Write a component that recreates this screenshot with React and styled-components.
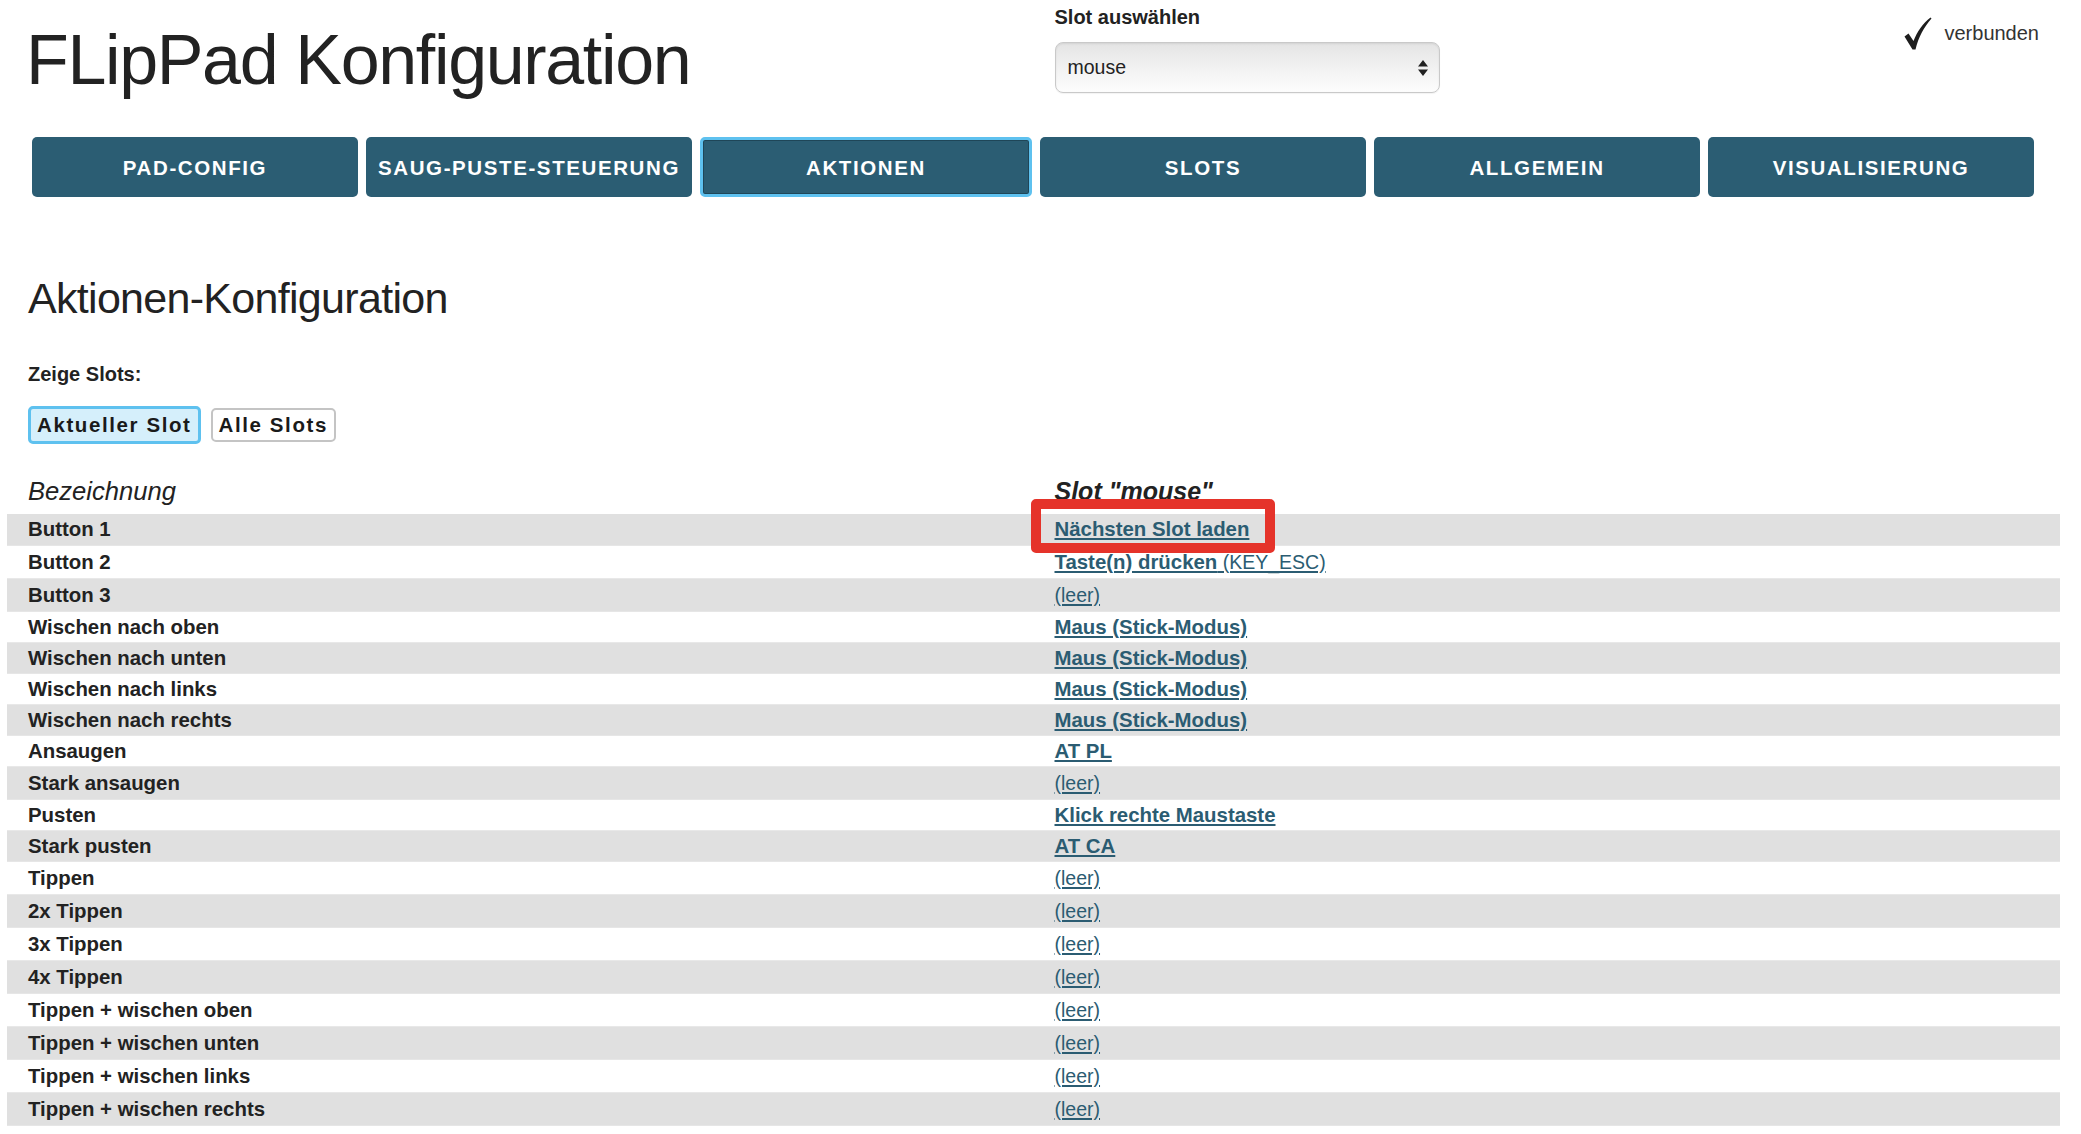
import React from 'react';
import styled, { createGlobalStyle } from 'styled-components';

const Global = createGlobalStyle`
  html, body { margin: 0; padding: 0; background: #fff; }
  body { font-family: "Liberation Sans", Arial, Helvetica, sans-serif; color: #222; }
  * { box-sizing: border-box; }
`;

const Page = styled.div`
  width: 2066px;
  position: relative;
`;

const Header = styled.header`
  display: grid;
  grid-template-columns: 1fr 1fr;
  margin: 0 6px 0 7px;
`;

const Title = styled.h1`
  margin: 25px 0 0 19px;
  font-size: 70px;
  line-height: 70px;
  font-weight: 400;
  letter-spacing: -1.35px;
  color: #222;
`;

const SlotArea = styled.div`
  display: flex;
  justify-content: space-between;
  align-items: flex-start;
  padding: 5px 21px 0 21px;
`;

const SlotPicker = styled.div`
  display: flex;
  flex-direction: column;
  gap: 13px;
`;

const Label = styled.label`
  font-size: 20px;
  line-height: 24px;
  font-weight: 700;
  color: #222;
`;

const SelectWrap = styled.div`
  position: relative;
  width: 385px;
  height: 51px;
  border: 1px solid #c9c9c9;
  border-radius: 8px;
  background: linear-gradient(#e4e4e4, #f4f4f4 60%, #fdfdfd);
  box-shadow: inset 0 1px 2px rgba(0,0,0,0.08), 0 1px 1px rgba(0,0,0,0.05);
  display: flex;
  align-items: center;
  padding-left: 12px;
  font-size: 19.5px;
  color: #222;
`;

const Arrows = styled.svg`
  position: absolute;
  right: 11px;
  top: 17px;
`;

const Status = styled.div`
  display: flex;
  align-items: center;
  gap: 12px;
  margin-top: 12px;
  font-size: 20px;
  color: #333;
`;

const Nav = styled.nav`
  display: flex;
  gap: 8px;
  margin: 42px 32px 0 32px;
`;

const Tab = styled.button`
  flex: 1;
  height: 60px;
  background: #2b5d73;
  color: #fff;
  border: ${p => (p.$active ? '3px solid #5ec1ef' : '0')};
  box-shadow: ${p => (p.$active ? 'inset 0 0 0 1px #1f4658' : 'none')};
  border-radius: 5px;
  font-family: "Liberation Sans", Arial, sans-serif;
  font-size: 20.5px;
  font-weight: 700;
  letter-spacing: 1.6px;
  text-transform: uppercase;
  padding: 2px 0 0;
`;

const Main = styled.main`
  margin: 0 6px 0 7px;
`;

const SectionTitle = styled.h2`
  margin: 75px 0 0 21px;
  font-size: 43px;
  line-height: 52px;
  font-weight: 400;
  letter-spacing: -0.7px;
  color: #222;
`;

const SubLabel = styled.div`
  margin: 38px 0 0 21px;
  font-size: 20px;
  line-height: 24px;
  font-weight: 700;
`;

const ToggleRow = styled.div`
  display: flex;
  align-items: center;
  gap: 10px;
  margin: 20px 0 0 21px;
`;

const Toggle = styled.button`
  height: ${p => (p.$active ? '38px' : '34px')};
  padding: 0 6px;
  border: ${p => (p.$active ? '3px solid #5ec1ef' : '2px solid #c4c4c4')};
  background: ${p => (p.$active ? '#d5effb' : '#fff')};
  border-radius: 5px;
  font-family: "Liberation Sans", Arial, sans-serif;
  font-size: 20.5px;
  font-weight: 700;
  letter-spacing: 1.6px;
  color: #1a1a1a;
`;

const Table = styled.table`
  width: 100%;
  margin-top: 32px;
  border-collapse: collapse;
  table-layout: fixed;
`;

const Th = styled.th`
  text-align: left;
  padding: 0 0 8px 21px;
  font-size: ${p => (p.$bold ? '25px' : '25.6px')};
  line-height: 30px;
  font-style: italic;
  font-weight: ${p => (p.$bold ? 700 : 400)};
  color: #222;
`;

const Row = styled.tr`
  height: ${p => (p.$tall ? '33px' : '31px')};
  background: ${p => (p.$odd ? '#e0e0e0' : '#fff')};
  border-bottom: 1px solid ${p => (p.$odd ? '#e6e6e6' : '#e8e8e8')};
`;

const Td = styled.td`
  padding: 0 0 0 21px;
  font-size: 20.4px;
  line-height: 22px;
  font-weight: 700;
  color: #222;
  vertical-align: middle;
`;

const ActionLink = styled.a`
  color: #2b5c72;
  text-decoration: underline;
  text-underline-offset: 2px;
  font-weight: 700;
  cursor: pointer;
`;

const Plain = styled.span`
  font-weight: 400;
  font-size: 19.5px;
`;

const Highlight = styled.div`
  position: absolute;
  left: 1031px;
  top: 499px;
  width: 244px;
  height: 54px;
  border: 10px solid #e5332a;
  border-radius: 5px;
  pointer-events: none;
`;

const CheckIcon = () => (
  <svg width="28" height="33" viewBox="0 0 28 33">
    <path d="M0.5 19.5 L4.5 16.5 L9.5 24 C13 15 19 6 26.5 0.5 L27.5 1.5 C20 10 14.5 20 11.5 32.5 L8.5 32.5 Z" fill="#1e1e1e" />
  </svg>
);

const rows = [
  ['Button 1', [['b', 'Nächsten Slot laden']]],
  ['Button 2', [['b', 'Taste(n) drücken'], ['n', ' (KEY_ESC)']]],
  ['Button 3', [['n', '(leer)']]],
  ['Wischen nach oben', [['b', 'Maus (Stick-Modus)']]],
  ['Wischen nach unten', [['b', 'Maus (Stick-Modus)']]],
  ['Wischen nach links', [['b', 'Maus (Stick-Modus)']]],
  ['Wischen nach rechts', [['b', 'Maus (Stick-Modus)']]],
  ['Ansaugen', [['b', 'AT PL']]],
  ['Stark ansaugen', [['n', '(leer)']]],
  ['Pusten', [['b', 'Klick rechte Maustaste']]],
  ['Stark pusten', [['b', 'AT CA']]],
  ['Tippen', [['n', '(leer)']]],
  ['2x Tippen', [['n', '(leer)']]],
  ['3x Tippen', [['n', '(leer)']]],
  ['4x Tippen', [['n', '(leer)']]],
  ['Tippen + wischen oben', [['n', '(leer)']]],
  ['Tippen + wischen unten', [['n', '(leer)']]],
  ['Tippen + wischen links', [['n', '(leer)']]],
  ['Tippen + wischen rechts', [['n', '(leer)']]],
];

const tabs = ['Pad-Config', 'Saug-Puste-Steuerung', 'Aktionen', 'Slots', 'Allgemein', 'Visualisierung'];

export default function App() {
  return (
    <Page>
      <Global />
      <Header>
        <Title>FLipPad Konfiguration</Title>
        <SlotArea>
          <SlotPicker>
            <Label>Slot auswählen</Label>
            <SelectWrap>
              mouse
              <Arrows width="10" height="16" viewBox="0 0 10 16">
                <path d="M5 0 L10 6.5 L0 6.5 Z M5 16 L10 9.5 L0 9.5 Z" fill="#222" />
              </Arrows>
            </SelectWrap>
          </SlotPicker>
          <Status>
            <CheckIcon />
            <span>verbunden</span>
          </Status>
        </SlotArea>
      </Header>
      <Nav>
        {tabs.map(t => (
          <Tab key={t} $active={t === 'Aktionen'}>{t}</Tab>
        ))}
      </Nav>
      <Main>
        <SectionTitle>Aktionen-Konfiguration</SectionTitle>
        <SubLabel>Zeige Slots:</SubLabel>
        <ToggleRow>
          <Toggle $active>Aktueller Slot</Toggle>
          <Toggle>Alle Slots</Toggle>
        </ToggleRow>
        <Table>
          <thead>
            <tr>
              <Th>Bezeichnung</Th>
              <Th $bold>Slot "mouse"</Th>
            </tr>
          </thead>
          <tbody>
            {rows.map(([name, parts], i) => {
              const tall = parts.some(p => p[0] === 'n');
              return (
                <Row key={name} $odd={i % 2 === 0} $tall={tall}>
                  <Td>{name}</Td>
                  <Td>
                    <ActionLink>
                      {parts.map(([k, s], j) =>
                        k === 'b' ? <React.Fragment key={j}>{s}</React.Fragment> : <Plain key={j}>{s}</Plain>
                      )}
                    </ActionLink>
                  </Td>
                </Row>
              );
            })}
          </tbody>
        </Table>
      </Main>
      <Highlight />
    </Page>
  );
}
